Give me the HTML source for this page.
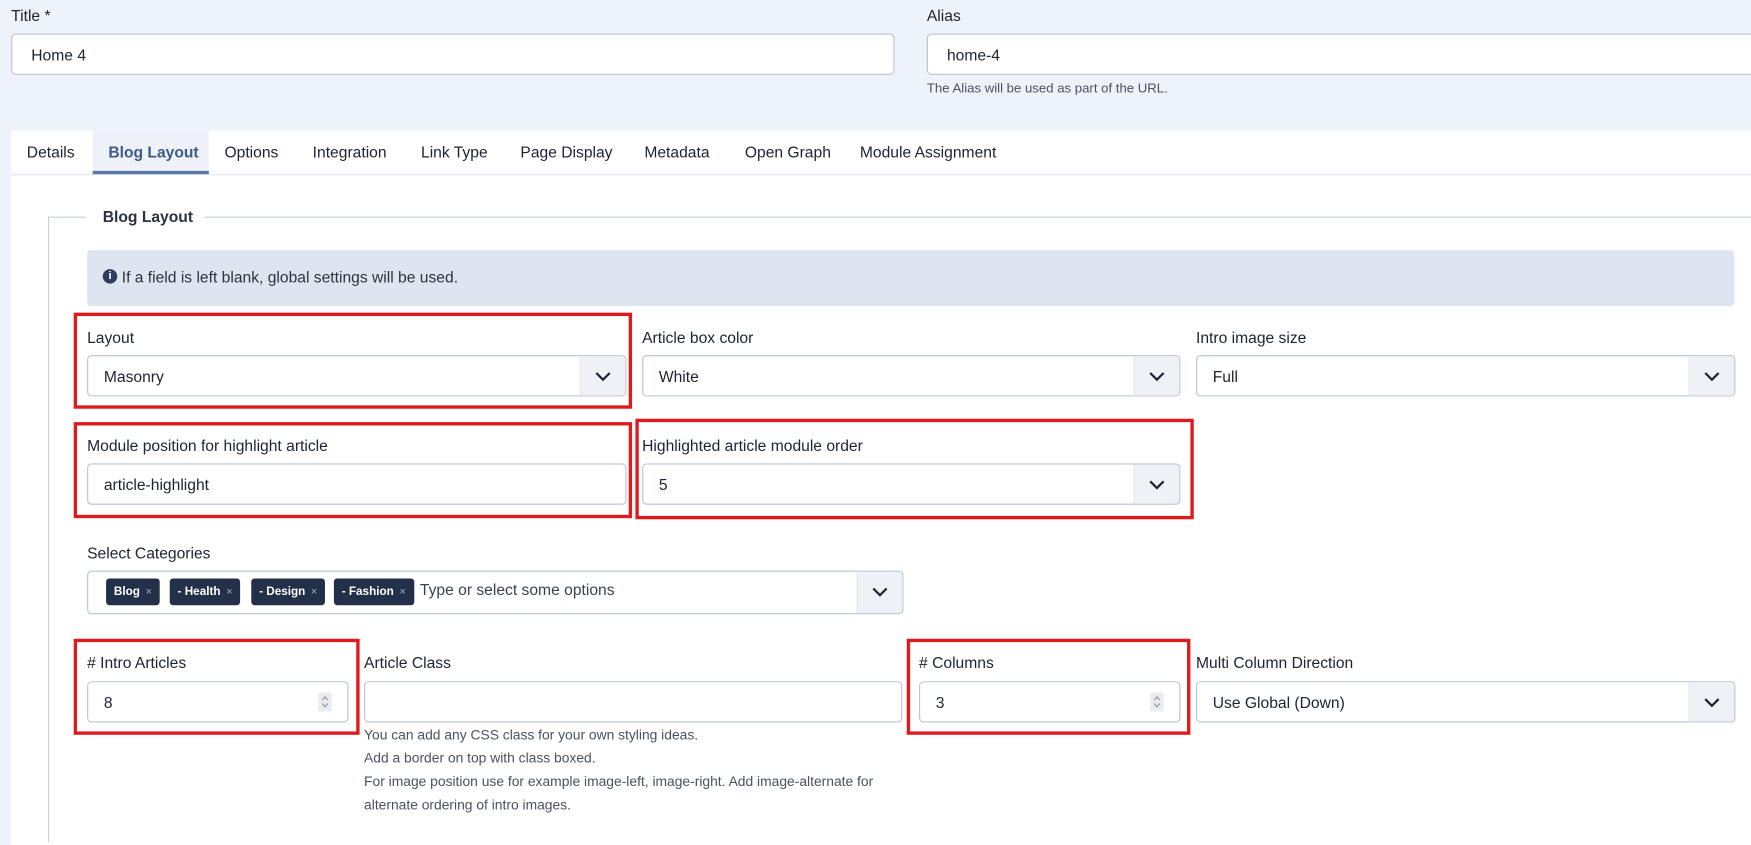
<!DOCTYPE html>
<html><head><meta charset="utf-8"><style>
*{box-sizing:border-box;margin:0;padding:0}
html,body{width:1751px;height:828px;overflow:hidden;background:#eef3fa;font-family:"Liberation Sans",sans-serif;color:#1c2333}
#w{position:absolute;left:0;top:0;width:1568px;height:741px;transform:scale(1.11671);transform-origin:0 0}
.a{position:absolute}
.lbl{position:absolute;font-size:14px;color:#1c2333}
.inp{position:absolute;background:#fff;border:1px solid #b9c3d3;border-radius:4px;font-size:14px;padding-left:14px;display:flex;align-items:center}
.chev{position:absolute;right:0;top:0;bottom:0;width:41px;background:#eef2f7;border-left:1px solid #e3e8ef;border-radius:0 4px 4px 0}
.chev svg{position:absolute;left:13px;top:13px}
.red{position:absolute;border:3px solid #e0191c}
.tab{position:absolute;top:128px;font-size:14px}
.chip{position:absolute;top:6px;height:24px;background:#22304a;color:#fff;font-size:10.5px;font-weight:bold;border-radius:3px;padding:0 7px;display:flex;align-items:center}
.chip i{font-style:normal;color:#aab;font-weight:normal;margin-left:5px;font-size:10px}
.help{position:absolute;font-size:12.4px;color:#4a5160}
.spin{position:absolute;right:14px;top:9px;width:12px;height:17px;background:#e9ecf0;border-radius:2px}
.spin svg{position:absolute;left:2px;top:2px}
</style></head><body><div id="w">
<div class="lbl" style="left:10px;top:6px">Title *</div>
<div class="inp" style="left:10px;top:30px;width:791px;height:37px;padding-left:17px">Home 4</div>
<div class="lbl" style="left:830px;top:6px">Alias</div>
<div class="inp" style="left:830px;top:30px;width:760px;height:37px;padding-left:17px">home-4</div>
<div class="help" style="left:830px;top:72px;font-size:11.8px">The Alias will be used as part of the URL.</div>

<div class="a" style="left:10px;top:117px;width:1580px;height:640px;background:#fff"></div>
<div class="a" style="left:10px;top:156px;width:1580px;height:1px;background:#dde3ec"></div>
<div class="a" style="left:83px;top:117px;width:104px;height:40px;background:#eef2f8"></div>
<div class="a" style="left:83px;top:153px;width:104px;height:3px;background:#5a76a5"></div>
<div class="tab" style="left:24px">Details</div>
<div class="tab" style="left:97px;color:#3d5a8a;font-weight:bold">Blog Layout</div>
<div class="tab" style="left:201px">Options</div>
<div class="tab" style="left:280px">Integration</div>
<div class="tab" style="left:377px">Link Type</div>
<div class="tab" style="left:466px">Page Display</div>
<div class="tab" style="left:577px">Metadata</div>
<div class="tab" style="left:667px">Open Graph</div>
<div class="tab" style="left:770px">Module Assignment</div>

<div class="a" style="left:43px;top:194px;width:1px;height:560px;background:#c8d0dc"></div>
<div class="a" style="left:43px;top:194px;width:34px;height:1px;background:#c8d0dc"></div>
<div class="a" style="left:183px;top:194px;width:1400px;height:1px;background:#c8d0dc"></div>
<div class="a" style="left:92px;top:186px;font-size:14px;font-weight:bold;color:#2b3240">Blog Layout</div>

<div class="a" style="left:78px;top:224px;width:1475px;height:50px;background:#dfe5f0;border-radius:3px"></div>
<div class="a" style="left:92px;top:241px;width:13px;height:13px;border-radius:50%;background:#2e3e5c;color:#fff;font-size:10px;font-weight:bold;text-align:center;line-height:13px">i</div>
<div class="a" style="left:109px;top:240px;font-size:14px;color:#2b3240">If a field is left blank, global settings will be used.</div>

<div class="red" style="left:66px;top:280px;width:500px;height:86px"></div>
<div class="lbl" style="left:78px;top:294px">Layout</div>
<div class="inp" style="left:78px;top:318px;width:483px;height:37px">Masonry<div class="chev"><svg width="14" height="10"><path d="M1 2l6 6 6-6" stroke="#1c2333" stroke-width="2" fill="none"/></svg></div></div>
<div class="lbl" style="left:575px;top:294px">Article box color</div>
<div class="inp" style="left:575px;top:318px;width:482px;height:37px">White<div class="chev"><svg width="14" height="10"><path d="M1 2l6 6 6-6" stroke="#1c2333" stroke-width="2" fill="none"/></svg></div></div>
<div class="lbl" style="left:1071px;top:294px">Intro image size</div>
<div class="inp" style="left:1071px;top:318px;width:483px;height:37px">Full<div class="chev"><svg width="14" height="10"><path d="M1 2l6 6 6-6" stroke="#1c2333" stroke-width="2" fill="none"/></svg></div></div>

<div class="red" style="left:66px;top:378px;width:500px;height:86px"></div>
<div class="lbl" style="left:78px;top:391px">Module position for highlight article</div>
<div class="inp" style="left:78px;top:415px;width:483px;height:37px">article-highlight</div>
<div class="red" style="left:569px;top:375px;width:500px;height:90px"></div>
<div class="lbl" style="left:575px;top:391px">Highlighted article module order</div>
<div class="inp" style="left:575px;top:415px;width:482px;height:37px">5<div class="chev"><svg width="14" height="10"><path d="M1 2l6 6 6-6" stroke="#1c2333" stroke-width="2" fill="none"/></svg></div></div>

<div class="lbl" style="left:78px;top:487px">Select Categories</div>
<div class="inp" style="left:78px;top:511px;width:731px;height:39px;padding-left:0">
<div class="chip" style="left:16px">Blog<i>×</i></div>
<div class="chip" style="left:73px">- Health<i>×</i></div>
<div class="chip" style="left:146px">- Design<i>×</i></div>
<div class="chip" style="left:220px">- Fashion<i>×</i></div>
<div class="a" style="left:297px;top:8px;font-size:14px;color:#3a4150">Type or select some options</div>
<div class="chev"><svg width="14" height="10"><path d="M1 2l6 6 6-6" stroke="#1c2333" stroke-width="2" fill="none"/></svg></div></div>

<div class="red" style="left:66px;top:572px;width:256px;height:86px"></div>
<div class="lbl" style="left:78px;top:585px"># Intro Articles</div>
<div class="inp" style="left:78px;top:610px;width:234px;height:37px">8<div class="spin"><svg width="8" height="13"><path d="M1.5 5l2.5-3 2.5 3M1.5 8l2.5 3 2.5-3" stroke="#8a93a3" stroke-width="1" fill="none"/></svg></div></div>
<div class="lbl" style="left:326px;top:585px">Article Class</div>
<div class="inp" style="left:326px;top:610px;width:482px;height:37px"></div>
<div class="help" style="left:326px;top:651px">You can add any CSS class for your own styling ideas.</div>
<div class="help" style="left:326px;top:672px">Add a border on top with class boxed.</div>
<div class="help" style="left:326px;top:693px">For image position use for example image-left, image-right. Add image-alternate for</div>
<div class="help" style="left:326px;top:714px">alternate ordering of intro images.</div>
<div class="red" style="left:812px;top:572px;width:254px;height:86px"></div>
<div class="lbl" style="left:823px;top:585px"># Columns</div>
<div class="inp" style="left:823px;top:610px;width:234px;height:37px">3<div class="spin"><svg width="8" height="13"><path d="M1.5 5l2.5-3 2.5 3M1.5 8l2.5 3 2.5-3" stroke="#8a93a3" stroke-width="1" fill="none"/></svg></div></div>
<div class="lbl" style="left:1071px;top:585px">Multi Column Direction</div>
<div class="inp" style="left:1071px;top:610px;width:483px;height:37px">Use Global (Down)<div class="chev"><svg width="14" height="10"><path d="M1 2l6 6 6-6" stroke="#1c2333" stroke-width="2" fill="none"/></svg></div></div>
</div></body></html>
